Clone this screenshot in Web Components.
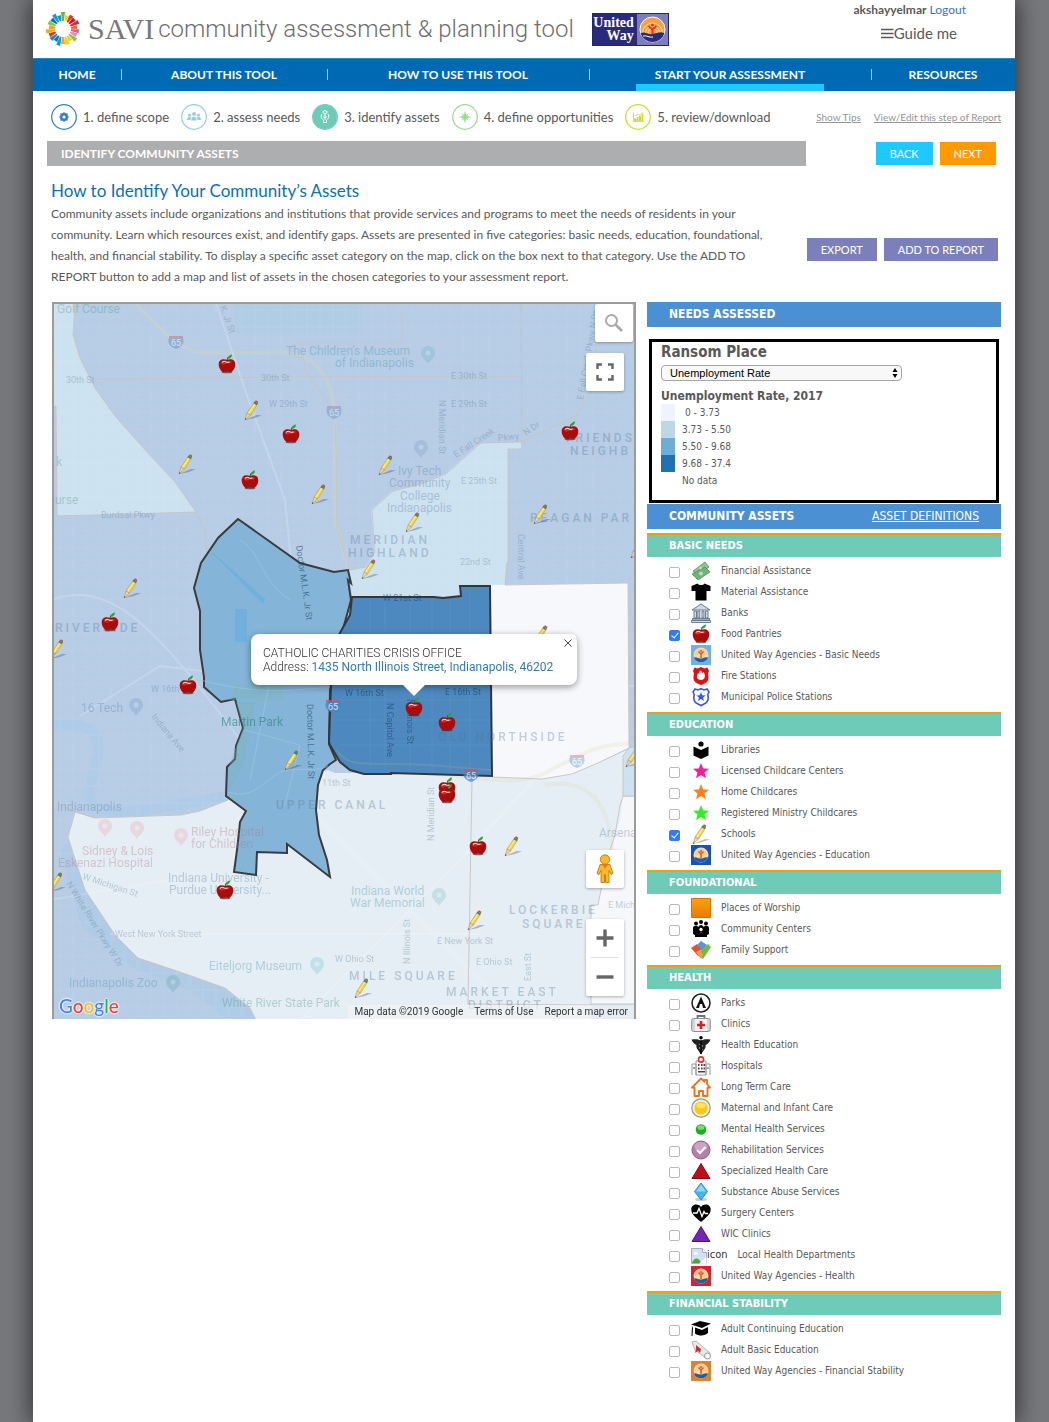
<!DOCTYPE html>
<html lang="en">
<head>
<meta charset="utf-8">
<title>SAVI community assessment &amp; planning tool</title>
<style>
html{background:#77787b}
body{margin:0;font-family:Lato,"Liberation Sans",sans-serif;color:#58595b}
</style>
</head>
<body>
<savi-app></savi-app>
<script>
function define(tag, css, html, after) {
  const t = document.createElement('template');
  t.innerHTML = '<style>*{box-sizing:border-box}' + css + '</style>' + (typeof html === 'string' ? html : '');
  customElements.define(tag, class extends HTMLElement {
    constructor() {
      super();
      this.attachShadow({mode: 'open'});
    }
    connectedCallback() {
      if (this.shadowRoot.childNodes.length) return;
      this.shadowRoot.append(t.content.cloneNode(true));
      if (after) after(this, this.shadowRoot);
    }
  });
}

/* ---------- artwork ---------- */
const star = c => `<path fill="${c}" d="M10 2l2.2 5.4 5.8.4-4.5 3.7 1.5 5.7-5-3.2-5 3.2 1.5-5.7L2 7.800l5.800-.4z"/>`;
const uw = c => `<path fill="${c}" d="M0 0h20v20H0z"/><circle cx="10" cy="10" r="7.500" fill="#fbd9a0"/><path d="M4.500 10a5.500 5.500 0 0111 0M6.500 10a3.500 3.500 0 017 0" fill="none" stroke="#f9c57e"/><path d="M10 13V8M7.500 6.500L10 9l2.500-2.500" stroke="#e4512f" stroke-width="1.500" fill="none"/><circle cx="10" cy="6" r="1" fill="#e4512f"/><path d="M3 12.500c3-1 4 1.500 7 1s4-2 7-1a7.500 7.500 0 01-14 0z" fill="#1f5fa8"/>`;
const tri = (a, b) => `<path d="M10 2.500L19 17.500H1z" fill="${a}" stroke="${b}"/>`;
const apple = `<ellipse cx="10" cy="18" rx="5.500" ry="1.300" fill="#222" opacity=".65"/><path fill="#a80c0c" d="M10 6c2.600-1.600 8.300-1.200 8.300 4.200 0 4-2.800 7.800-5.300 7.800-1.200 0-1.800-.4-3-.4s-1.800.4-3 .4c-2.500 0-5.300-3.800-5.300-7.800C1.700 4.800 7.400 4.400 10 6z"/><path fill="#d32b24" d="M4 9.500c0-3 3-3.200 5-2.300 2 .9 4-.5 6 .5-1 2.300-3 1.300-5 1.800-2.500.6-4 2-6 0z"/><path d="M5 8.500c1-1.500 3-1.400 4.500-.6s2 .3 3 .2" fill="none" stroke="#fff" stroke-width="1.100" opacity=".9"/><path d="M10 7.500c0-2 .5-3.500 1.500-4.800" stroke="#5b3413" fill="none"/><path fill="#2fa32f" d="M10.500 4.800C11 2 13 .8 15 .6c0 2.600-1.500 4.200-4.500 4.200z"/>`;
const pencil = `<path d="M2 20l12-5 5 .3-8 3z" fill="#445" opacity=".35"/><path fill="#f4d14b" stroke="#b0963a" stroke-width=".5" d="M4 13L11 2.500l3.300 2L7.500 15z"/><path fill="#fbeb95" d="M5 13.300L11.600 3.500l1 .6L6 14z"/><path fill="#f0cfa2" stroke="#8f7a55" stroke-width=".4" d="M4 13l3.500 2L2 20z"/><path fill="#333" d="M2.500 18.300l1 .6L2 20z"/><path fill="#3e8f63" d="M10.400 3.300l1.300-2 3.300 2-1.300 2z"/><path fill="#dc3d4a" d="M11.700 1.300C12.600-.4 15.900.9 15 3.300z"/>`;
const ICONS = {
  money: `<g stroke="#4c8a52" stroke-width=".7"><path fill="#8fc28f" d="M2 10L14 1l4 5L6 15z"/><path fill="#72b277" d="M1 13l13-7 5 5L7 19z"/></g><circle cx="10" cy="12.500" r="2" fill="#b9ddb9"/><circle cx="9.500" cy="7" r="1.300" fill="#c9e6c9"/>`,
  shirt: `<path d="M6.500 1.500c1.500 2 5.500 2 7 0L19.500 4v5h-4v9.500h-11V9h-4V4z"/>`,
  bank: `<g fill="#cfdbe3" stroke="#5b7384" stroke-width=".9"><path d="M1 7l9-6 9 6z"/><path d="M3 8h2.500v7H3zM6.800 8h2v7h-2zM11 8h2v7h-2zM14.500 8H17v7h-2.500z"/><path d="M1.500 15.500h17V17h-17zM.5 17.500h19v2H.500z"/></g>`,
  apple,
  uwBasic: uw('#6cb2e6'), uwEdu: uw('#1454b8'), uwHealth: uw('#d8232e'), uwFin: uw('#d98336'),
  fire: `<path fill="#e31010" d="M3.500 1.500l3 1 3.500-1.500 3.500 1.500 3-1L18 5l-1 2.500c1 4 .8 7.500-2.500 9.500-2 1-3.500 1.500-4.500 2.500-1-1-2.500-1.500-4.500-2.500C2.200 15 2 11.500 3 7.500L2 5z"/><path fill="#fff" d="M9 4.500c3 1 1.500 2.500 3 2.500l.5-1c2 2.500 2.300 8-2.500 8-4.500 0-5-4-3-6.500 1.200 1 .5-1.500 2-3z"/>`,
  police: `<path fill="#fff" stroke="#3b56f0" stroke-width="1.600" d="M4 2l3 1 3-1.300L13 3l3-1 2 3-1.200 2.500c1 4 .7 6.500-2 8.500-1.800 1.200-3.500 1.500-4.800 2.700-1.300-1.200-3-1.500-4.800-2.700-2.700-2-3-4.500-2-8.500L2 5z"/><path fill="#3b56f0" d="M10 5l1.300 3.200 3.500.2-2.700 2.200.9 3.400-3-1.900L7 14l.9-3.400-2.700-2.200 3.500-.2z"/>`,
  book: `<circle cx="10" cy="4" r="2.600"/><path d="M2.500 6.500L10 10l7.500-3.500v9L10 19l-7.500-3.500z"/>`,
  starPink: star('#fb1a9b'), starOrange: star('#ff7d1c'), starGreen: star('#33ee22'),
  pencil,
  square: `<defs><linearGradient id="o" x2="0" y2="1"><stop stop-color="#ffa20a"/><stop offset="1" stop-color="#e97a00"/></linearGradient></defs><path fill="url(#o)" stroke="#e06d00" d="M.5.500h19v19H.500z"/>`,
  people: `<circle cx="5" cy="4.500" r="2"/><circle cx="10" cy="3" r="2"/><circle cx="15" cy="4.500" r="2"/><path d="M2 9c0-3 5-3 5.500-.5C7 5 13 5 12.500 8.500 13 6 18 6 18 9v6l-2 1v2h-4v-3c0-2-4-2-4 0v3H4v-2l-2-1z"/><circle cx="10" cy="10.500" r="1.700" fill="#fff"/><path d="M8 18v-3c0-2 4-2 4 0v3z"/>`,
  puzzle: `<path fill="#5b94dc" d="M5 6l5-5 6 4-5 6z"/><path fill="#e2512f" d="M0 8l6-4 1 3 3 1-1 4 1 3-3 1z"/><path fill="#6bbf3c" d="M10 10l7-6 3 3-8 12-4-3z"/><path fill="#f19a4d" d="M5 12l4-2 3 4-2 5z"/>`,
  park: `<circle cx="10" cy="10" r="9" fill="#fff" stroke="#222" stroke-width="1.600"/><path fill="#111" d="M10 3.500L15 15h-3l-1-4h-2l-1 4H5z"/>`,
  clinic: `<path d="M6.500 5V2h7v3" fill="none" stroke="#6d7478" stroke-width="1.800"/><rect x=".7" y="4.500" width="18.600" height="13" rx="2" fill="#d5d8da" stroke="#8a8f92"/><rect x="4" y="5" width="12" height="12" fill="#f1f1f1"/><path d="M10 7v8M6 11h8" stroke="#d2202a" stroke-width="2.600"/>`,
  caduceus: `<circle cx="10" cy="2.800" r="1.800"/><path d="M.5 4.500C5 4 8 4 10 6c2-2 5-2 9.500-1.500-1 3-3 4.500-5 5.500 1 3-2.500 6-4.500 9.500-2-3.500-5.500-6.500-4.500-9.500-2-1-4-2.500-5-5.500z" fill="#222"/><path d="M8 9l4 2-4 2 4 2" fill="none" stroke="#999" stroke-width=".8"/><path d="M10 5v14" stroke="#000" stroke-width="1.400"/>`,
  hospital: `<path d="M1 19V8h4v11M15 19V8h4v11M5 19V5h10v14z" fill="#fff" stroke="#999"/><path d="M7 8h1.500v2H7zM10 8h1.500v2H10zM12.500 8h1.500v2h-1.500zM7 11.500h1.500v2H7zM10 11.500h1.500v2H10zM12.500 11.500h1.500v2h-1.500zM7 15h7v1.500H7zM2.500 11h1v2h-1zM16.500 11h1v2h-1z" fill="#444"/><circle cx="10" cy="3.500" r="2.600" fill="#fff" stroke="#e03232" stroke-width="1.600"/>`,
  house: `<path fill="#fff" stroke="#f37021" stroke-width="1.900" stroke-linejoin="round" d="M1 10.500L10 1.500l3.500 3.200V3h2.500v4l3 3.500-2.500.3V19h-4.500v-5h-4v5H3.500v-8.300z"/>`,
  sun: `<circle cx="10" cy="10" r="9.200" fill="#f3f0e2" stroke="#9a9583" stroke-width="1.200"/><circle cx="10" cy="10" r="6.600" fill="#fbc511"/><ellipse cx="10" cy="7.500" rx="4.500" ry="3" fill="#ffe45c"/>`,
  dot: `<circle cx="10" cy="10.500" r="5.300" fill="#1fae25"/><ellipse cx="10" cy="8.500" rx="3.500" ry="2.300" fill="#79dc70"/>`,
  check: `<circle cx="10" cy="10" r="9" fill="#b57fa9" stroke="#8f5c88"/><ellipse cx="10" cy="6.500" rx="6.500" ry="4.500" fill="#cda4c5"/><path d="M6 10l3 3 5.500-6" fill="none" stroke="#fff" stroke-width="2"/>`,
  triRed: tri('#c60a17', '#7d0a10'), triPurple: tri('#7426b0', '#4a167d'),
  diamond: `<ellipse cx="10" cy="17.500" rx="6" ry="1.600" fill="#ccc"/><path d="M10 1l6.500 8.500L10 18 3.500 9.500z" fill="#45b5ee" stroke="#3288c8"/><path d="M10 2.500l5 7H5z" fill="#8ad8fb"/>`,
  heart: `<path d="M10 19C4 14 .3 11 .3 6.500.3 1 7 0 10 4c3-4 9.700-3 9.700 2.500C19.700 11 16 14 10 19z"/><path d="M2 10h4l2-4.500 3 8 2-5 1.200 2H17" fill="none" stroke="#fff" stroke-width="1.300"/>`,
  broken: `<path d="M.5 3.500h11l4 4v11H.500z" fill="#cfe0f7" stroke="#a9aeb4"/><path d="M11.500 3.500v4h4" fill="#fff" stroke="#a9aeb4"/><circle cx="5" cy="8.500" r="1.800" fill="#fff"/><path d="M1 18c2-6 7-6 9 0z" fill="#4ba83b"/><path d="M8 18.500l7.500-6.500v7z" fill="#fff"/>`,
  cap: `<path d="M0 5.500L9 2l11 2.500-9 4.500z"/><path d="M4 8.500l7 2.500 6-3v6c-3 3-9 3.500-13 .5zM1 7l1 2-.5 8h-1z"/>`,
  diploma: `<path d="M1 2l4-1 14 12-3 6-12-9z" fill="#e9e9e9" stroke="#a2a2a2" stroke-width=".8"/><circle cx="16.500" cy="16" r="3" fill="#f7f7f7" stroke="#999"/><path d="M5 5l5 4-1 4-2-2-3 2 1-4z" fill="#c7303a"/>`
};

define('map-icon', ':host{display:block;width:20px;height:20px}svg{display:block;width:20px;height:20px}', '', (h, r) => {
  r.innerHTML += `<svg viewBox="0 0 20 20" aria-hidden="true">${ICONS[h.getAttribute('name')]}</svg>`;
});

/* ---------- header ---------- */
const wheelColors = ['#6bb543','#f6d21b','#ee3124','#c4172b','#e5243b','#f1671f','#e9569b','#f28ab0','#8cc63f','#f6d21b','#f6d21b','#f9a61a','#00a0df','#1a6fb8','#0a8fd0','#ee3124','#f9a61a','#f6a01a','#8cc63f','#0a74b8','#159bd7','#00a0df'];
const wheel = wheelColors.map((c, i) => {
  const long = [17, 14, 16, 15][i % 4];
  return `<path fill="${c}" transform="rotate(${i * 360 / wheelColors.length} 18 18)" d="M17.200 10l-1.300-${long - 8}h4.200l-1.300 ${long - 8}z"/>`;
}).join('');

define('savi-header', `
:host{display:flex;justify-content:space-between;height:58px;padding:0 49px 0 12px}
.brand{display:flex;align-items:center}
.brand svg{display:block;flex:none}
.savi{font:30px "Liberation Serif",serif;color:#77787b;margin:0 4px 0 7px}
.tool{font:300 24px Roboto,"Liberation Sans",sans-serif;color:#6d6e71;margin-right:18px;white-space:nowrap}
.uw{display:flex;width:77px;height:33px;background:#2a2a7c;border:1px solid #23236e}
.uw b{font:bold 14px/13px "Liberation Serif",serif;color:#fff;text-align:right;flex:1;padding:2px 3px 0 0}
.user{font-size:12px;line-height:20px;text-align:right}
.user a{color:#337ab7;text-decoration:none}
.guide{display:flex;align-items:center;justify-content:flex-end;font:15px/26px Lato,sans-serif;color:inherit;background:none;border:0;padding:0;margin:0 9px 0 auto}
`, `
<div class="brand">
<svg width="36" height="36" viewBox="0 0 36 36" aria-hidden="true">${wheel}</svg>
<span class="savi">SAVI</span><span class="tool">community assessment &amp; planning tool</span>
<div class="uw"><b>United Way</b><svg width="31" height="31" viewBox="0 0 31 31" aria-hidden="true"><path fill="#7d7fbd" d="M0 0h31v31H0z"/><circle cx="15.500" cy="15.500" r="12.500" fill="#f7a13c" stroke="#fff"/><g fill="none" stroke="#fde2bd"><path d="M5.500 19a10 10 0 1120 0M8.500 19a7 7 0 1114 0M11 19a4.500 4.500 0 119 0"/></g><circle cx="15.500" cy="11" r="1.500" fill="#e63329"/><path d="M15.500 20v-5M11.500 12l4 3.500 4-3.500" stroke="#e63329" stroke-width="2" fill="none"/><path d="M3.500 19c5-2 7 2 12 1s7-3 12-1a12.500 12.500 0 01-24 0z" fill="#2a2a7c"/><path d="M6 22c4-1 6 2 10 1" stroke="#fff" fill="none"/></svg></div>
</div>
<div><div class="user"><b>akshayyelmar</b> <a href="#">Logout</a></div>
<button class="guide" type="button"><svg width="13" height="13" viewBox="0 0 13 13" aria-hidden="true"><path d="M0 2.500h12.500M0 6.500h12.500M0 10.500h12.500" stroke="#58595b" stroke-width="1.500"/></svg>Guide me</button></div>`);

define('savi-nav', `
:host{display:block;background:#0069b4;border-top:1px solid #2b86c8}
nav{display:flex;height:32px}
a{display:flex;justify-content:center;align-items:stretch;color:#fff;font-weight:bold;font-size:12px;line-height:32px;text-decoration:none;white-space:nowrap;position:relative}
a+a::before{content:"";position:absolute;left:0;top:10px;height:11px;width:1px;background:#a9cce6}
span{padding:0 19px}
[aria-current] span{box-shadow:inset 0 -7px #1fc8ff}
`, `<nav><a href="#" style="flex:88"><span>HOME</span></a><a href="#" style="flex:206"><span>ABOUT THIS TOOL</span></a><a href="#" style="flex:262"><span>HOW TO USE THIS TOOL</span></a><a href="#" style="flex:282" aria-current="page"><span>START YOUR ASSESSMENT</span></a><a href="#" style="flex:144"><span>RESOURCES</span></a></nav>`);

const STEP = {
  scope: ['#2f7fd0', `<circle cx="13" cy="13" r="3" fill="none" stroke="#2f7fd0" stroke-width="2"/><path d="M13 8v10M8 13h10M9.500 9.500l7 7M16.500 9.500l-7 7" stroke="#2f7fd0" stroke-width="1.200"/><circle cx="13" cy="13" r="1.500" fill="#fff"/>`],
  needs: ['#8fcdf0', `<g fill="#8fcdf0"><circle cx="13" cy="10" r="1.900"/><circle cx="8.500" cy="11" r="1.500"/><circle cx="17.500" cy="11" r="1.500"/><path d="M10.300 16.500c0-5 5.400-5 5.400 0zM6 16c0-3.500 3-4 4-2.700l-.5 2.700zM20 16c0-3.500-3-4-4-2.700l.5 2.700z"/></g>`],
  assets: ['#6dcbb8', `<circle cx="13" cy="13" r="12" fill="#6dcbb8"/><path d="M10 10c-2 3 0 5 1.500 6v2.500h3V16c1.500-1 3.500-3 1.500-6M10.500 8l2.500 2 2.500-2-2.500-1.500zM13 10v6M11 12.500l2 1.500 2-1.500" fill="none" stroke="#fff"/>`],
  opps: ['#9adb8c', `<path fill="#9adb8c" d="M13 6l1 5 3-2-2 3 5 1-5 1 2 3-3-2-1 5-1-5-3 2 2-3-5-1 5-1-2-3 3 2z"/>`],
  review: ['#cddc29', `<path fill="#cddc29" d="M9 14.500h2V17H9zM11.500 13h2v4h-2zM14 12h2v5h-2zM16.500 10h1.500v7h-1.500z"/><path d="M8.500 8.500v9H19M9.500 12l3-1.500 2.500.5 3-2.500" fill="none" stroke="#cddc29" stroke-width=".8"/>`]
};
define('savi-step', `
:host{display:block}
a{display:flex;align-items:center;gap:6px;font-size:13px;line-height:26px;color:inherit;text-decoration:none;white-space:nowrap}
svg{display:block}`, '<a href="#"><slot></slot></a>', (h, r) => {
  const [c, art] = STEP[h.getAttribute('icon')];
  r.querySelector('a').insertAdjacentHTML('afterbegin', `<svg width="26" height="26" viewBox="0 0 26 26" aria-hidden="true"><circle cx="13" cy="13" r="12.300" fill="#fff" stroke="${c}" stroke-width="1.200"/>${art}</svg>`);
});

define('savi-button', `
:host{display:block}
button{display:block;font:11px/23px Lato,sans-serif;color:#fff;background:var(--tone,#7b80ba);border:0;padding:0 14px;white-space:nowrap}`, '<button type="button"><slot></slot></button>');

define('savi-intro', `
:host{display:block}
.steps{display:flex;align-items:center;gap:12px;padding:13px 0 11px 4px}
.steps p{margin:0 0 0 auto;display:flex;gap:13px;font-size:10px;white-space:nowrap}
.steps p a{color:#939598}
.bar{display:flex;align-items:center;gap:7px;padding-right:5px}
h2{flex:1;margin:0 63px 0 0;background:#adaeb0;color:#fff;font-size:12px;line-height:25px;padding:0 14px}
.text{display:flex;align-items:center;justify-content:space-between;padding:13px 3px 0 4px;gap:20px}
.text div{flex:0 1 725px}
h1{margin:0;font-size:17px;line-height:24px;font-weight:normal;color:#0a70b9}
.text p{margin:0;font-size:12px;line-height:21px}
.acts{padding-top:33px;display:flex;gap:7px}
`, `
<div class="steps"><savi-step icon="scope">1. define scope</savi-step><savi-step icon="needs">2. assess needs</savi-step><savi-step icon="assets">3. identify assets</savi-step><savi-step icon="opps">4. define opportunities</savi-step><savi-step icon="review">5. review/download</savi-step><p><a href="#">Show Tips</a><a href="#">View/Edit this step of Report</a></p></div>
<div class="bar"><h2>IDENTIFY COMMUNITY ASSETS</h2><savi-button style="--tone:#1fc8ff">BACK</savi-button><savi-button style="--tone:#ff9900">NEXT</savi-button></div>
<div class="text"><div><h1>How to Identify Your Community’s Assets</h1><p>Community assets include organizations and institutions that provide services and programs to meet the needs of residents in your community. Learn which resources exist, and identify gaps. Assets are presented in five categories: basic needs, education, foundational, health, and financial stability. To display a specific asset category on the map, click on the box next to that category. Use the ADD TO REPORT button to add a map and list of assets in the chosen categories to your assessment report.</p></div><section class="acts"><savi-button>EXPORT</savi-button><savi-button>ADD TO REPORT</savi-button></section></div>`);

/* ---------- map ---------- */
const apples = [[227,364],[291,434],[250,480],[570,431],[110,622],[188,685],[225,890],[414,707],[447,722],[447,787],[447,794],[478,846]];
const pencils = [[245,420],[179,474],[312,504],[379,475],[406,532],[534,524],[362,579],[124,598],[50,659],[534,645],[285,770],[505,856],[468,930],[355,998],[49,892],[626,767],[631,558]];
const T = (x, y, s, cls = '', rot = 0) => `<text class="${cls}" transform="translate(${x} ${y}) rotate(${rot})">${s}</text>`;
const labels = [
  T(57,313,'Golf Course','p g'), T(286,355,"The Children's Museum",'p'), T(335,367,'of Indianapolis','p'),
  T(66,383,'30th St'), T(261,381,'30th St'), T(451,379,'E 30th St'), T(269,407,'W 29th St'), T(451,407,'E 29th St'),
  T(56,466,'k','p g'), T(55,504,'urse','p g'), T(101,518,'Burdsal Pkwy'), T(220,307,'K. Jr St','',70),
  T(439,400,'N Meridian St','',90), T(456,458,'E Fall Creek','',-33), T(498,441,'Pkwy','',-5), T(526,436,'N Dr','',-35),
  T(583,400,'E Fall Creek Pkwy N Dr','',-80),
  T(398,475,'Ivy Tech','p n'), T(389,487,'Community','p n'), T(400,500,'College','p n'), T(387,512,'Indianapolis','p n'),
  T(461,484,'E 25th St'), T(460,565,'22nd St'), T(518,534,'Central Ave','',90),
  T(350,544,'MERIDIAN','d'), T(348,557,'HIGHLAND','d'), T(566,442,'FRIENDS','d'), T(570,455,'NEIGHB','d'), T(530,522,'REAGAN PAR','d'),
  T(55,632,'RIVERSIDE','d'), T(296,546,'Doctor M.L.K. Jr St','k',82), T(307,704,'Doctor M.L.K. Jr St','k',89),
  T(151,692,'W 16th'), T(81,712,'16 Tech','p n'), T(151,717,'Indiana Ave','',50), T(221,726,'Martin Park','p g k'),
  T(57,811,'Indianapolis','p n'), T(191,836,'Riley Hospital','p h'), T(191,848,'for Children','p h'),
  T(82,855,'Sidney &amp; Lois','p h'), T(58,867,'Eskenazi Hospital','p h'), T(66,884,'N White River Pkwy W Dr','',58), T(82,879,'W Michigan St','',18),
  T(168,882,'Indiana University -','p n'), T(169,894,'Purdue University...','p n'), T(115,937,'West New York Street'),
  T(209,970,'Eiteljorg Museum','p'), T(69,987,'Indianapolis Zoo','p'), T(222,1007,'White River State Park','p g'), T(335,962,'W Ohio St'),
  T(276,809,'UPPER CANAL','d'), T(322,786,'11th St'), T(345,696,'W 16th St','k'), T(445,695,'E 16th St','k'), T(383,601,'W 21st St','k'),
  T(387,703,'N Capitol Ave','k',90), T(407,699,'N Illinois St','k',90), T(438,741,'OLD NORTHSIDE','d'),
  T(434,841,'N Meridian St','',-90), T(351,895,'Indiana World','p'), T(350,907,'War Memorial','p'), T(410,964,'N Illinois St','',-90),
  T(437,944,'E New York St'), T(476,965,'E Ohio St'), T(531,981,'East St','',-90),
  T(509,914,'LOCKERBIE','d'), T(522,928,'SQUARE','d'), T(349,980,'MILE SQUARE','d'), T(446,996,'MARKET EAST','d'), T(468,1009,'DISTRICT','d'),
  T(599,837,'Arsena','p n'), T(608,908,'E Mich')
].join('');
const pin = (x, y, c) => `<path fill="${c}" d="M${x} ${y + 11}c-2-4-7-6-7-11a7 7 0 0114 0c0 5-5 7-7 11z"/><circle cx="${x}" cy="${y}" r="2.500" fill="#fff" opacity=".5"/>`;
const shield = (x, y, o) => `<g opacity="${o}"><path fill="#4a86c8" d="M${x - 7} ${y - 4}h14c2 6-2 9-7 11-5-2-9-5-7-11z"/><path fill="#d05060" d="M${x - 7} ${y - 6}h14v2h-14z"/><text x="${x - 5}" y="${y + 4}" style="fill:#fff;font-size:9px;opacity:1">65</text></g>`;
const roads = [];
for (let x = 60; x < 640; x += 13) roads.push(`M${x} 300v720`);
for (let y = 310; y < 1020; y += 17) roads.push(`M50 ${y}h590`);

define('asset-map', `
:host{display:block;position:relative;height:717px;border:2px solid #9a9b9a;border-bottom:0;overflow:hidden;background:#b7cde5;font-family:Roboto,"Liberation Sans",sans-serif}
.canvas{position:absolute;inset:0;width:100%;height:100%;display:block}
text{font-size:9px;fill:#577695;opacity:.32}
.p{font-size:12px;fill:#3d8fa8}.n{fill:#58789a}.g{fill:#3a9480}.h{fill:#b06a86}
.d{font-size:12px;font-weight:500;letter-spacing:3px;fill:#4f7498}
.k{fill:#1c3c62;opacity:.55}.g.k{fill:#1f7d78}
button{position:absolute;display:grid;place-items:center;width:38px;height:38px;padding:0;border:0;background:#fff;border-radius:2px;box-shadow:0 1px 3px rgba(0,0,0,.3)}
.search{right:1px;top:0}.full{right:10px;top:49px}.peg{right:10px;bottom:131px}
.zoom{position:absolute;right:10px;bottom:23px;background:#fff;border-radius:2px;box-shadow:0 1px 3px rgba(0,0,0,.3)}
.zoom button{position:static;box-shadow:none;background:none}
.zoom i{display:block;height:1px;margin:0 5px;background:#e0e0e0}
.info{position:absolute;left:197px;top:330px;width:326px;padding:12px 12px 11px;background:#fff;border-radius:8px;box-shadow:0 2px 7px rgba(0,0,0,.4);font-size:12px;font-weight:300;line-height:14px;color:#333;white-space:nowrap}
.info::after{content:"";position:absolute;left:152px;top:100%;border:11px solid transparent;border-top-color:#fff;border-bottom:0}
.info a{color:#337ab7;text-decoration:none;font-weight:400}
.info button{width:16px;height:16px;right:1px;top:1px;box-shadow:none}
.legal{position:absolute;right:0;bottom:0;display:flex;gap:11px;font-size:10px;line-height:14px;color:#333;background:rgba(245,245,245,.6);padding:0 6px;white-space:nowrap}
.legal a{color:inherit;text-decoration:none}
.google{position:absolute;left:5px;bottom:1px;font:500 19px/24px Lato,sans-serif;text-decoration:none;text-shadow:0 0 2px #fff,0 0 2px #fff,0 0 2px #fff}
`, `
<svg class="canvas" role="img" aria-label="Map of community assets near Ransom Place"><defs><g id="apple">${apple}</g><g id="pencil">${pencil}</g></defs>
<g transform="translate(-54 -304)">
<path opacity=".4" fill="#a8cde0" d="M235 300h127v33H235z"/>
<path d="M50 727c30-6 50 0 48 25s-20 45 0 55 50 2 80-2 40-10 58-8" fill="none" stroke="#a9cae8" stroke-width="10" opacity=".6"/>
<path fill="#a9cae6" opacity=".5" d="M60 850l12-10 13 50 30 45 23 23 42 14 45 16 25 20 7 14h-25l-40-30-60-25-50-40z"/>
<path fill="#cde2f0" d="M50 300h25l-2 35 7 23 15 30 20 28 32 36 28 30 21 30-139 4-1-110h-6z"/>
<path fill="#cde2f0" d="M521 442l-41 1-35 31-25 10-28 7-21 19 2 20 1 22-9 15-16 3 3 26 109 1v-12h44l1-22 2-1V449h13z"/>
<path fill="#e4eef4" d="M75 812l-7 25 17 53 30 45 23 23 42 14 45 16 25 20 7 14h380V745l-32 15-50 17-163-4H335l-7-3-88 30-12 0-28 11-20 4-86 3z"/>
<path fill="#f7f8fc" d="M490 585l138-2 1 165-29 14-28 12-30 5-50-2z"/>
<path fill="#b7cde5" d="M629 583h10v170h-10z"/><path fill="#cde2f0" d="M629 748l-6 8v41h14v-49z"/>
<path fill="#f5f7fa" d="M623 797h15v207h-47V905h7l9-45 8-25 5-15z"/><path fill="#cddfed" d="M591 1004h46v16h-46z"/>
<path d="${roads.join('')}" stroke="#fff" opacity=".08" fill="none"/>
<path d="M50 600c60-20 100 20 190 140l100 100 150 150M300 1020L460 860l110-120M215 300l30 90 40 110 20 200M80 716l80-50 170 20h310M110 934h370M50 900l150-25" stroke="#fff" stroke-width="2" opacity=".18" fill="none"/>
<path d="M135 303c20 20 45 50 70 50h60c45-5 65 15 70 60v90c0 40 12 50 14 70M335 745c10 30 40 25 90 28s90 15 120 0 50-30 90-30M545 785c60-10 70 40 68 100" stroke="#e0dcae" stroke-width="4" opacity=".25" fill="none"/>
<g fill="none" stroke="#c9c3c0" stroke-width="1"><path d="M75 303l-2 32 7 23 15 30 20 28 32 36 28 30 21 30-139 4-1-110M95 379l208-2h218M521 303l1 139-41 1-35 31-25 10-28 7-21 19 3 42-9 15-16 3-13-40-1-90c0-45-30-60-30-70l-3-13h-10v-13h109v-30M521 442l55-26 20-30v-83M196 512l9 20 2 20M521 449h-13v113l-3 23 123-2 1 165-29 14-28 12-30 5-50-2M54 803l21 9 20 6 86-3 19-4 28-11M75 812l-7 25 17 53 30 45 23 23 42 14 45 16 25 20 7 14M472 778l-4 226 123 1v-100h7l9-45 8-25 5-30 3-9h15M629 748l-6 8v41M591 1004h46" opacity=".9"/></g>
<path fill="#84b5d8" stroke="#3b3b3b" stroke-width="2" d="M238 519l-20 19-17 25-7 25 6 23v39l4 27v10l17 15 14-3 8 29-7 18-1 13-8 8-1 29 20 15-6 11-1 10-2 18-3 22 22 3 1-23 30 1v-9l43 33-3-17-8-25-3-25 2-25 5-15 7-6 6-4-7-16 1-54 10-50 11-40-3-20 3 3-3-13-14 2-34-9z"/>
<path fill="#78b5b4" opacity=".35" d="M228 700h55v-15h-40l-7 0zM236 702h20l-12 60-15 30v-25l7-20 7-19z"/>
<path fill="#6fb0dd" d="M235 609h12v33h-12zM211 551l54 48-2 5-50-50z"/><path d="M200 680c80 20 100 5 150 8M228 792c30 10 40-20 60-22s30 2 40-4M240 540c20 10 20 40 50 60M245 730l55 15-15 60M270 680l-20 100" fill="none" stroke="#9ec8e6" opacity=".6"/>
<path fill="#4d89bf" stroke="#36363a" stroke-width="2" d="M352 597h82l9 1 18-2-1-10h30l2 190-101-3v1h-27l-14-4-10-8-10-17-1-3 2-57 5-45 14-25z"/>
<path d="M370 600v170M385 600v170M410 600v170M432 600v170M450 600v170M470 590v180M335 650h155M333 700h157M332 720h158M340 745h150" stroke="#6ba0cf" opacity=".3"/>
<path d="M336 750c12 15 20 14 60 14s60 4 95 6" stroke="#7a9aa0" stroke-width="2" fill="none" opacity=".5"/>
${shield(176,342,.4)}${shield(334,412,.35)}${shield(333,706,.8)}${shield(471,775,.7)}${shield(577,761,.35)}
<g opacity=".4">${pin(428,353,'#7fb9cf')}${pin(421,447,'#86abcf')}${pin(136,705,'#7fa5cc')}${pin(439,895,'#8fcbd0')}${pin(173,982,'#6fb0bf')}${pin(317,964,'#8fcbd8')}${pin(105,826,'#eeb3c0')}${pin(137,828,'#eeb3c0')}${pin(181,835,'#eeb3c0')}</g>
${labels}
${pencils.map(([x, y]) => `<use href="#pencil" x="${x - 2}" y="${y - 20}"/>`).join('')}
${apples.map(([x, y]) => `<use href="#apple" x="${x - 10}" y="${y - 10}"/>`).join('')}
</g></svg>
<button class="search" type="button" aria-label="Search"><svg width="20" height="20" viewBox="0 0 20 20"><circle cx="7.500" cy="7.500" r="5.500" fill="none" stroke="#aaa" stroke-width="2"/><path d="M11.500 11.500l6.500 6.500" stroke="#aaa" stroke-width="2.600"/></svg></button>
<button class="full" type="button" aria-label="Toggle fullscreen"><svg width="18" height="18" viewBox="0 0 18 18"><path d="M1.500 6V1.500H6M12 1.500h4.500V6M16.500 12v4.500H12M6 16.500H1.500V12" fill="none" stroke="#666" stroke-width="2.400"/></svg></button>
<button class="peg" type="button" aria-label="Street View"><svg width="18" height="30" viewBox="0 0 18 30"><g fill="#fbb829" stroke="#c27a10" stroke-width=".9"><path d="M4 10.500h10l3 9-2 1-2-4v12H9.500v-8h-1v8H5v-12l-2 4-2-1z"/><circle cx="9" cy="5.500" r="4.700"/></g><path d="M6 10.500h6l-3 4z" fill="#e5772a"/></svg></button>
<div class="zoom"><button type="button" aria-label="Zoom in"><svg width="18" height="18" viewBox="0 0 18 18"><path d="M9 .5v17M.5 9h17" stroke="#666" stroke-width="3.400"/></svg></button><i></i><button type="button" aria-label="Zoom out"><svg width="18" height="18" viewBox="0 0 18 18"><path d="M.5 9h17" stroke="#666" stroke-width="3.400"/></svg></button></div>
<div class="info">CATHOLIC CHARITIES CRISIS OFFICE<br>Address: <a href="#">1435 North Illinois Street, Indianapolis, 46202</a><button type="button" aria-label="Close"><svg width="8" height="8" viewBox="0 0 8 8"><path d="M.5.500l7 7M7.500.500l-7 7" stroke="#444"/></svg></button></div>
<a class="google" href="#"><span style="color:#4285f4">G</span><span style="color:#ea4335">o</span><span style="color:#fbbc05">o</span><span style="color:#4285f4">g</span><span style="color:#34a853">l</span><span style="color:#ea4335">e</span></a>
<div class="legal"><span>Map data ©2019 Google</span><a href="#">Terms of Use</a><a href="#">Report a map error</a></div>`);

/* ---------- side panel ---------- */
define('needs-panel', `
:host{display:block;margin:12px 2px 1px;border:3px solid #000;padding:1px 9px 11px}
h3{margin:0;font-size:15px;line-height:18px}
select{display:block;appearance:none;width:241px;height:16px;margin:4px 0 7px;padding:0 8px;border:1px solid #a6a6a6;border-radius:4px;font:11px/14px "Liberation Sans",sans-serif;color:#000;background:#f8f8f8}
.sel{position:relative;width:241px}
.sel svg{position:absolute;right:4px;top:3px;pointer-events:none}
h4{margin:0;font-size:12px;line-height:16px}
ul{list-style:none;margin:0;padding:0;font-size:10px;line-height:17px}
li{display:flex;gap:7px}
i{width:14px;height:17px;background:var(--c)}
.in{padding-left:3px}
`, `<h3>Ransom Place</h3>
<div class="sel"><select aria-label="Indicator"><option>Unemployment Rate</option></select><svg width="6" height="10" viewBox="0 0 6 10"><path d="M3 0l2.500 4h-5zM3 10l2.500-4h-5z"/></svg></div>
<h4>Unemployment Rate, 2017</h4>
<ul><li style="--c:#eff3ff"><i></i><span class="in">0 - 3.73</span></li><li style="--c:#bdd7e7"><i></i><span>3.73 - 5.50</span></li><li style="--c:#6baed6"><i></i><span>5.50 - 9.68</span></li><li style="--c:#2171b5"><i></i><span>9.68 - 37.4</span></li><li><i></i><span>No data</span></li></ul>`);

define('panel-title', `
:host{display:flex;justify-content:space-between;background:#4a90d2;color:#fff;font-size:12px;font-weight:bold;line-height:25px;padding:0 22px}
::slotted(a){color:#fff;font-weight:normal}`, '<slot></slot>');

define('asset-item', `
:host{display:block}
label{display:flex;align-items:center;height:21px;font-size:10px;gap:10px}
input{appearance:none;width:11px;height:11px;margin:3px 1px 0 0;border:1px solid #b9b9b9;border-radius:2px;background:#fff;flex:none}
input:checked{background:#2f7cf6;border-color:#2f7cf6}
input:checked::after{content:"";display:block;width:3px;height:6px;margin:0 0 0 3px;border:solid #fff;border-width:0 1px 1px 0;transform:rotate(40deg)}
.alt{margin:0 0 0 -14px;font-size:11px;color:#333}
`, '<label><input type="checkbox"><slot></slot></label>', (h, r) => {
  const input = r.querySelector('input');
  input.checked = h.hasAttribute('checked');
  input.insertAdjacentHTML('afterend', `<map-icon name="${h.getAttribute('icon')}"></map-icon>` + (h.hasAttribute('alt') ? `<span class="alt">${h.getAttribute('alt')}</span>` : ''));
});

define('asset-group', `
:host{display:block}
h3{margin:0;background:#6dcbb8;border-top:2px solid #ee9f12;color:#fff;font-size:11px;line-height:22px;padding:0 22px}
div{padding:3px 22px 5px}`, '<h3><slot name="title"></slot></h3><div><slot></slot></div>');

const groups = [
  ['BASIC NEEDS', [['money','Financial Assistance'],['shirt','Material Assistance'],['bank','Banks'],['apple','Food Pantries',1],['uwBasic','United Way Agencies - Basic Needs'],['fire','Fire Stations'],['police','Municipal Police Stations']]],
  ['EDUCATION', [['book','Libraries'],['starPink','Licensed Childcare Centers'],['starOrange','Home Childcares'],['starGreen','Registered Ministry Childcares'],['pencil','Schools',1],['uwEdu','United Way Agencies - Education']]],
  ['FOUNDATIONAL', [['square','Places of Worship'],['people','Community Centers'],['puzzle','Family Support']]],
  ['HEALTH', [['park','Parks'],['clinic','Clinics'],['caduceus','Health Education'],['hospital','Hospitals'],['house','Long Term Care'],['sun','Maternal and Infant Care'],['dot','Mental Health Services'],['check','Rehabilitation Services'],['triRed','Specialized Health Care'],['diamond','Substance Abuse Services'],['heart','Surgery Centers'],['triPurple','WIC Clinics'],['broken','Local Health Departments'],['uwHealth','United Way Agencies - Health']]],
  ['FINANCIAL STABILITY', [['cap','Adult Continuing Education'],['diploma','Adult Basic Education'],['uwFin','United Way Agencies - Financial Stability']]]
];
define('asset-panel', `
:host{display:block;font-family:"DejaVu Sans Condensed","DejaVu Sans",sans-serif}
.groups{padding-top:4px}`, `
<panel-title>NEEDS ASSESSED</panel-title>
<needs-panel></needs-panel>
<panel-title>COMMUNITY ASSETS<a href="#">ASSET DEFINITIONS</a></panel-title>
<div class="groups">${groups.map(([t, items]) => `<asset-group><span slot="title">${t}</span>${items.map(([i, l, c]) => `<asset-item icon="${i}"${c ? ' checked' : ''}${i === 'broken' ? ' alt="icon"' : ''}>${l}</asset-item>`).join('')}</asset-group>`).join('')}</div>`);

define('savi-app', `
:host{display:block;min-height:100vh;padding:0 34px 0 33px;overflow:hidden}
.page{min-height:100vh;background:#fff;box-shadow:0 0 22px 2px rgba(0,0,0,.6)}
main{padding:0 14px}
.cols{display:grid;grid-template-columns:minmax(0,584fr) minmax(0,354fr);align-items:start;gap:11px;padding:15px 0 0 5px}
`, `<div class="page"><savi-header></savi-header><savi-nav></savi-nav><main><savi-intro></savi-intro><div class="cols"><asset-map></asset-map><asset-panel></asset-panel></div></main></div>`);
</script>
</body>
</html>
